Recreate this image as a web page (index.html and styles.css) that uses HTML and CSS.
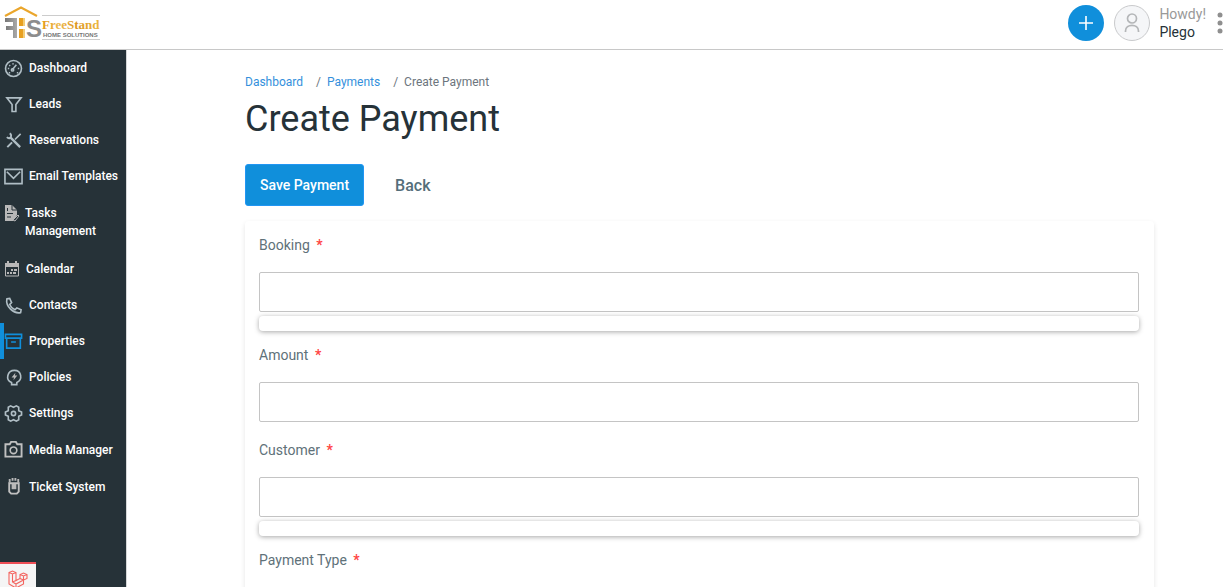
FILE: index.html
```html
<!DOCTYPE html>
<html lang="en">
<head>
<meta charset="utf-8">
<title>Create Payment</title>
<link rel="stylesheet" href="styles.css">
</head>
<body>
<header class="topbar">
  <a class="brand" href="#" aria-label="FreeStand Home Solutions">
    <svg width="104" height="44" viewBox="0 0 104 44">
      <defs>
        <linearGradient id="gold" x1="0" x2="1"><stop offset="0" stop-color="#e29a1c"/><stop offset=".3" stop-color="#edb84a"/><stop offset=".6" stop-color="#dd9620"/><stop offset="1" stop-color="#edb940"/></linearGradient>
        <linearGradient id="steel" x1="0" x2="1"><stop offset="0" stop-color="#777"/><stop offset="1" stop-color="#aaa"/></linearGradient>
      </defs>
      <path d="M5 16 21 7.500 37 16" fill="none" stroke="#eaa62c" stroke-width="2"/>
      <path d="M5 18h12v20h-4v-8H6v-4h7v-4H5z" fill="url(#steel)"/>
      <path d="M19 18h4v8h-4zM19 29h4v9h-4z" fill="#e8a020"/>
      <path d="M23 18h2v8h-2zM23 29h2v9h-2z" fill="#f3cd78"/>
      <text class="brand-mark" x="26" y="37">S</text>
      <path d="M42 15.500h58M42 39.500h58" stroke="#ccc" stroke-width="1"/>
      <text class="brand-name" x="42" y="29" fill="url(#gold)">FreeStand</text>
      <text class="brand-sub" x="43" y="37">HOME SOLUTIONS</text>
    </svg>
  </a>
  <div class="tools">
    <button class="add" aria-label="Add"><svg width="14" height="14" viewBox="0 0 14 14"><path d="M7 0v14M0 7h14" stroke="#fff" stroke-width="1.6"/></svg></button>
    <span class="avatar"><svg width="20" height="24" viewBox="0 0 20 24" fill="none" stroke="#b4b6b8" stroke-width="1.7"><circle cx="10" cy="7.500" r="4.500"/><path d="M3.500 21v-1c0-7.500 13-7.500 13 0v1"/></svg></span>
    <span class="user"><span class="hello">Howdy!</span><span>Plego</span></span>
    <button class="more" aria-label="More"><svg width="6" height="22" viewBox="0 0 6 22" fill="#8f8f8f"><circle cx="3" cy="3" r="2.5"/><circle cx="3" cy="11" r="2.5"/><circle cx="3" cy="19" r="2.5"/></svg></button>
  </div>
</header>
<div class="shell">
  <aside class="sidebar">
    <nav class="nav">
      <a class="item" href="#"><svg class="icon" viewBox="0 0 20 20"><circle cx="10" cy="10" r="8.4"/><path d="m9 11 4-5"/><circle cx="9" cy="11.500" r="1.200"/><path d="M4 10h1.500M5.500 6.500l1 .8M9.500 4.500v1.300M14.500 10H16M5 14.500h1.500M13.500 14.500H15"/></svg>Dashboard</a>
      <a class="item" href="#"><svg class="icon" viewBox="0 0 20 20"><path d="M3 3h15l-5.500 7v7.300H8.500V10z"/></svg>Leads</a>
      <a class="item" href="#"><svg class="icon" viewBox="0 0 20 20"><path d="m7 7 10 10" stroke-width="2.400"/><path d="M3 6.500c2 2 5 1 4.500-2C7.300 3.500 7 3 6 2.500" stroke-width="2"/><path d="m17.500 3-6 6"/><path d="m8.500 12-5 5" stroke-width="2"/></svg>Reservations</a>
      <a class="item" href="#"><svg class="icon" viewBox="0 0 20 20"><path d="M1 2.500h18v15H1zM3 5l7 7 7-7"/></svg>Email Templates</a>
      <a class="item tasks" href="#"><svg class="icon small" viewBox="0 0 16 18"><path class="solid" d="M1 1h7l5 5v5l-4 6H1z"/><path class="cut" d="M8 1v5h5M3.500 4v3M3 9.500h6M3 13h4"/><path d="m9 16 5-5 1 1-4 5z"/></svg>Tasks Management</a>
      <a class="item" href="#"><svg class="icon small" viewBox="0 0 16 18"><path d="M1.500 4h13v12h-13z"/><path class="solid" d="M1 3h14v4H1zM3 1h2v3H3zM11 1h2v3h-2zM7 9h2v2H7zM10 9h3v2h-3zM3 12h2v2H3zM6 12h2v2H6zM9 12h3v2H9z"/></svg>Calendar</a>
      <a class="item" href="#"><svg class="icon" viewBox="0 0 20 20"><path d="M3 3l3-.5 2 4.500-2 2c1 2.500 3 4.500 5.500 5.500l2-2 4.500 2-.5 3C10 19 1.500 11 3 3z"/></svg>Contacts</a>
      <a class="item active" href="#"><svg class="icon" viewBox="0 0 20 20"><path d="M1.500 2.500h17v4h-17zM2.800 6.500V17h14.400V6.500M7.500 10.500h5"/></svg>Properties</a>
      <a class="item" href="#"><svg class="icon" viewBox="0 0 20 20"><path d="M8 17.500v-2.200C1 12.500 3.500 2.500 11 2.500s9 10 2.500 12.800v2.200z"/><path class="solid" d="m12 5-4 5h2.500L10 13l4-5h-2.500z"/></svg>Policies</a>
      <a class="item" href="#"><svg class="icon" viewBox="0 0 20 20"><path d="m7 2 3 1.500L13 2l2.500 1.500V7L18.500 8.500v3L15.500 13v3.500L13 18l-3-1.500L7 18l-2.500-1.500V13L1.500 11.500v-3L4.500 7V3.500z"/><circle cx="10" cy="10" r="2.200"/></svg>Settings</a>
      <a class="item media" href="#"><svg class="icon" viewBox="0 0 20 20"><path d="M1.500 4.500H6L7.500 2h5L14 4.500h4.500v13h-17z" stroke-width="2"/><circle cx="10" cy="10.800" r="3.500"/></svg>Media Manager</a>
      <a class="item media" href="#"><svg class="icon" viewBox="0 0 20 20"><path d="M5.500 6.500h10v9l-2 2h-6l-2-2z" stroke-width="2"/><path class="solid" d="M5 2h2v4H5zM8 1h2v3H8zM11 1h2v3h-2zM14 2h2v4h-2zM8 7h5v6H8z"/></svg>Ticket System</a>
    </nav>
    <button class="debug" aria-label="Debug bar"><svg width="20" height="20" viewBox="0 0 20 20" fill="none" stroke="#f4645f" stroke-width="1.100"><path d="M1 2.500 4.500 1 8 2.500v8l4-2v-4L15.500 3 19 4.500v4L15.500 10v4L8 18l-7-4zM1 2.500 4.500 4 8 2.500M4.500 4v8L8 14l7.500-4M12 4.500 15.500 6 19 4.500M15.500 6v4L12 8.500M8 14v4M4.500 12 8 10.500"/></svg></button>
  </aside>
  <main class="main">
    <nav class="crumbs" aria-label="Breadcrumb"><a href="#">Dashboard</a><span>/&nbsp; <a href="#">Payments</a></span><span>/&nbsp; Create Payment</span></nav>
    <h1 class="title">Create Payment</h1>
    <form>
      <div class="actions"><button class="save" type="button">Save Payment</button><button class="back" type="button">Back</button></div>
      <section class="card">
        <div class="field"><label for="booking">Booking <b>*</b></label><input id="booking" type="text"><div class="results"></div></div>
        <div class="field"><label for="amount">Amount <b>*</b></label><input id="amount" type="text"></div>
        <div class="field"><label for="customer">Customer <b>*</b></label><input id="customer" type="text"><div class="results"></div></div>
        <div class="field"><label for="ptype">Payment Type <b>*</b></label><input id="ptype" type="text"></div>
      </section>
    </form>
  </main>
</div>
</body>
</html>
```
FILE: styles.css
```css
* { box-sizing: border-box; }
body {
  margin: 0;
  height: 100vh;
  display: flex;
  flex-direction: column;
  overflow: hidden;
  font-family: Roboto, "Liberation Sans", sans-serif;
  color: #263238;
  background: #fff;
}
button { border: 0; padding: 0; background: none; font-family: inherit; }
a { text-decoration: none; }
svg { display: block; flex: none; }

.topbar {
  flex: none;
  height: 50px;
  display: flex;
  justify-content: space-between;
  border-bottom: 1px solid #c8c8c8;
}
.brand-mark { font: bold 24px "Liberation Sans", sans-serif; fill: #8d8d8d; }
.brand-name { font: bold 13px "Liberation Serif", serif; }
.brand-sub { font: bold 6px "Liberation Sans", sans-serif; fill: #777; }
.tools { display: flex; align-items: center; padding-bottom: 4px; }
.add, .avatar {
  width: 36px;
  height: 36px;
  border-radius: 50%;
  display: flex;
  align-items: center;
  justify-content: center;
}
.add { background: #108fdb; margin-right: 10px; }
.avatar { background: #f5f6f8; border: 1px solid #c9cacc; margin-right: 9px; }
.user { display: flex; flex-direction: column; font-size: 14px; line-height: 18px; }
.hello { color: #999; }
.more { margin-left: 11px; }

.shell { flex: 1; min-height: 0; display: flex; }
.sidebar {
  flex: none;
  width: 127px;
  display: flex;
  flex-direction: column;
  justify-content: space-between;
  align-items: stretch;
  background: #263238;
  border-right: 1px solid #d5d7d8;
}
.nav { display: flex; flex-direction: column; }
.item {
  display: flex;
  align-items: center;
  gap: 6px;
  height: 36px;
  padding-left: 4px;
  color: #fff;
  font-size: 12px;
  font-weight: 500;
  line-height: 18px;
  white-space: nowrap;
}
.icon { width: 19px; height: 19px; fill: none; stroke: #b0bec5; stroke-width: 1.7px; }
.icon .solid { fill: #b8b8b8; stroke: none; }
.icon .cut { stroke: #263238; stroke-width: 1px; }
.small { width: 16px; height: 18px; stroke: #b8b8b8; stroke-width: 1px; }
.tasks { height: 57px; gap: 5px; white-space: normal; align-items: flex-start; padding-top: 10px; }
.media { height: 37px; }
.media .icon { stroke: #c0c0c0; }
.active { border-left: 4px solid #108fdb; padding-left: 0; }
.active .icon { stroke: #108fdb; }
.debug {
  width: 36px;
  height: 25px;
  padding: 6px 0 0 8px;
  overflow: hidden;
  background: #f5f5f5;
  border-top: 2px solid #ef4f57;
}

.main { flex: 1; min-width: 0; padding: 23px 69px 0 118px; overflow: hidden; }
.crumbs { display: flex; gap: 13px; font-size: 12px; line-height: 18px; color: #6c757d; }
.crumbs a { color: #3490dc; }
.title { margin: 7px 0 24px; font-size: 36px; font-weight: 400; line-height: 42px; }
.actions { display: flex; }
.actions button { height: 42px; font-weight: 500; }
.actions .save { padding: 0 14px; font-size: 14px; color: #fff; background: #108fdb; border: 1px solid #2196f3; border-radius: 3px; }
.actions .back { padding: 0 31px; font-size: 16px; color: #546e7a; }
.card { margin-top: 15px; padding: 15px 15px 0 14px; border-radius: 4px; box-shadow: 0 2px 5px rgba(0, 0, 0, .1); }
.field { padding-bottom: 15px; }
.field label { display: block; margin-bottom: 18px; font-size: 14px; line-height: 18px; color: #607179; }
.field b { margin-left: 3px; color: #ff4444; }
.field input { display: block; width: 100%; height: 40px; margin: 0 0 4px; padding: 0 12px; border: 1px solid #c4c4c4; border-radius: 2px; background: #fff; font: inherit; }
.results { height: 15px; border-radius: 4px; background: #fff; box-shadow: 0 1px 5px rgba(0, 0, 0, .35); }
```
